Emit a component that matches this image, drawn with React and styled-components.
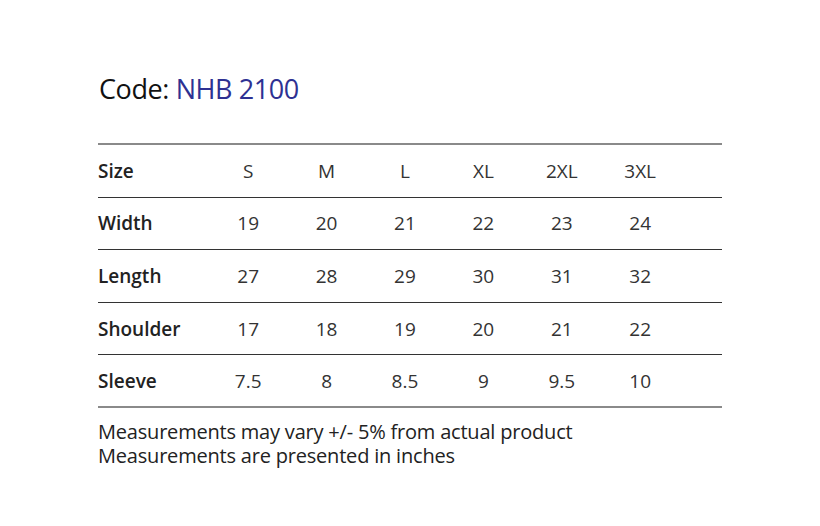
import React from "react";
import styled, { createGlobalStyle } from "styled-components";

const Global = createGlobalStyle`
  body {
    margin: 0;
    background: #fff;
    font-family: "Open Sans", "Noto Sans", sans-serif;
    color: #222;
  }
  * { box-sizing: border-box; }
`;

const S_Page = styled.div`
  width: 722px;
  padding: 69px 0 0 98px;
`;

const S_Title = styled.h1`
  margin: 0 0 34px 1px;
  font-size: 27px;
  font-weight: 400;
  line-height: 40px;
  color: #111;
  letter-spacing: -0.4px;
`;

const S_Code = styled.span`
  color: #2e3192;
`;

const S_Table = styled.div`
  border-top: 2px solid #8a8a8a;
`;

const S_Row = styled.div`
  display: grid;
  grid-template-columns: 111px repeat(6, 78.4px) 1fr;
  align-items: center;
  height: 52.6px;
  border-bottom: ${(p) => (p.$last ? "2px solid #8a8a8a" : "1px solid #333")};
  font-size: 19px;
`;

const S_Label = styled.div`
  font-weight: 600;
  color: #222;
`;

const S_Cell = styled.div`
  text-align: center;
  color: #333;
`;

const S_Notes = styled.div`
  margin-top: 12px;
  font-size: 20px;
  line-height: 24px;
  color: #222;
  letter-spacing: -0.2px;
`;

const S_NoteLine = styled.div`
  white-space: nowrap;
`;

const rows = [
  ["Size", ["S", "M", "L", "XL", "2XL", "3XL"]],
  ["Width", ["19", "20", "21", "22", "23", "24"]],
  ["Length", ["27", "28", "29", "30", "31", "32"]],
  ["Shoulder", ["17", "18", "19", "20", "21", "22"]],
  ["Sleeve", ["7.5", "8", "8.5", "9", "9.5", "10"]],
];

export default function App() {
  return (
    <>
      <Global />
      <S_Page>
        <S_Title>
          Code: <S_Code>NHB 2100</S_Code>
        </S_Title>
        <S_Table>
          {rows.map(([label, vals], i) => (
            <S_Row key={label} $last={i === rows.length - 1}>
              <S_Label>{label}</S_Label>
              {vals.map((v, j) => (
                <S_Cell key={j}>{v}</S_Cell>
              ))}
              <div />
            </S_Row>
          ))}
        </S_Table>
        <S_Notes>
          <S_NoteLine>Measurements may vary +/- 5% from actual product</S_NoteLine>
          <S_NoteLine>Measurements are presented in inches</S_NoteLine>
        </S_Notes>
      </S_Page>
    </>
  );
}
